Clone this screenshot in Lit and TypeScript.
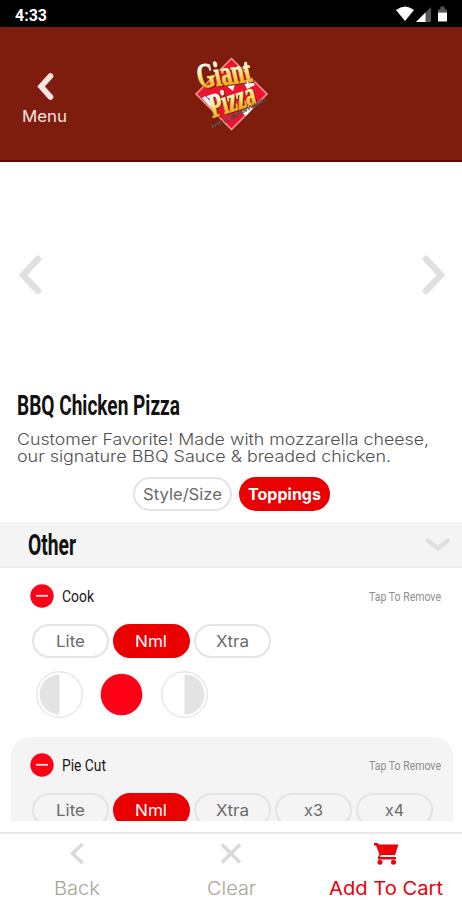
import { LitElement, html, svg, css } from "lit";
import { customElement, property } from "lit/decorators.js";

/** One line of text fitted to a given width; the box is as tall as the capitals. */
@customElement("fit-text")
class FitText extends LitElement {
  @property() text = "";
  @property({ type: Number }) w = 40;
  @property({ type: Number }) cap = 12;
  static styles = css`
    :host { display: block; flex: none; }
    svg { display: block; overflow: visible; }
    text { fill: currentColor; }
  `;
  render() {
    return html`<svg width=${this.w} height=${this.cap}>
      <text x="0" y=${this.cap} font-size=${this.cap / 0.72} textLength=${this.w}
        lengthAdjust="spacingAndGlyphs">${this.text}</text>
    </svg>`;
  }
}

const fit = (text: string, w: number, cap: number, cls = "") =>
  html`<fit-text class=${cls} .text=${text} .w=${w} .cap=${cap}></fit-text>`;

@customElement("pizza-logo")
class PizzaLogo extends LitElement {
  static styles = css`
    :host { display: block; }
    svg { display: block; overflow: visible; }
    .word { font-family: "Liberation Serif", serif; font-weight: 700; }
    .edge { fill: #5a2408; stroke: #5a2408; stroke-width: 1.6; }
    .gold { fill: url(#gold); stroke: url(#gold); stroke-width: 0.9; }
    .small { font: italic 700 5px "Liberation Sans", sans-serif; fill: #a3928c; stroke: #33211c; stroke-width: 0.3; }
  `;
  render() {
    return html`<svg width="76" height="76" viewBox="0 0 76 76">
      <defs>
        <linearGradient id="gold" x1="0" y1="0" x2="0" y2="1">
          <stop offset="0.3" stop-color="#fffdf0" /><stop offset="0.55" stop-color="#fae36e" />
          <stop offset="0.8" stop-color="#efb01a" />
        </linearGradient>
      </defs>
      <path d="M38.500 2.500 74 38 38.500 73.500 3 38Z" fill="#ec1530" stroke="#f79a9a" stroke-width="1.500" />
      <path d="M50 25 58 23 62 29 54 33ZM48 56 56 48 59 53 53 60ZM12 40 22 50 22 56 9 42ZM34 30 42 28 40 35Z" fill="#fff" />
      ${[
        ["Giant", "translate(6.500 32) rotate(-7) skewX(5)", 54, 35],
        ["Pizza", "translate(19.500 62) rotate(-18) skewX(-4)", 47, 34],
      ].map(([t, tr, len, size]) => svg`<g transform=${tr} class="word">
        <text class="edge" x="0.6" y="0.6" font-size=${size} textLength=${len} lengthAdjust="spacingAndGlyphs">${t}</text>
        <text class="gold" font-size=${size} textLength=${len} lengthAdjust="spacingAndGlyphs">${t}</text>
      </g>`)}
      <text class="small" transform="translate(19 73) rotate(-27)" textLength="61" lengthAdjust="spacingAndGlyphs">THE COMPANY WITH</text>
    </svg>`;
  }
}

@customElement("app-root")
class AppRoot extends LitElement {
  static styles = css`
    :host {
      display: flex; flex-direction: column; width: 462px; height: 900px; overflow: hidden;
      background: #fff; font-family: Inter, "Liberation Sans", sans-serif; color: #6a6a6a;
    }
    * { box-sizing: border-box; }
    svg { display: block; flex: none; }
    .status { height: 27px; background: #000; color: #fff; display: flex; justify-content: space-between; padding: 6px 14px 0 15px; }
    .clock { font-family: Roboto, sans-serif; font-weight: 700; padding-top: 3px; }
    .header { height: 135px; background: #7e1c0e; border-bottom: 2px solid #6b0200; display: grid; grid-template-columns: 1fr 76px 1fr; color: #f5e4e0; }
    .back { display: flex; flex-direction: column; width: 89px; align-items: center; padding-top: 45px; gap: 9px; }
    .logo { padding-top: 29px; }
    .carousel { height: 225px; display: flex; justify-content: space-between; align-items: center; padding: 0 15px 0 17px; }
    .info { height: 135px; padding: 7px 17px 0; }
    .din { font-family: Roboto, "Liberation Sans", sans-serif; color: #111; }
    .heavy { font-weight: 700; }
    .desc { color: #505050; font-weight: 300; height: 11px; }
    .lines { display: flex; flex-direction: column; gap: 6px; padding-top: 19px; }
    .tabs { display: flex; gap: 7px; padding: 15.5px 0 0 116px; }
    .pill { width: 77px; height: 34px; flex: none; border: 2px solid #e4e4e4; border-radius: 17px; display: flex; align-items: center; justify-content: center; }
    .pill.wide { width: 99px; }
    .pill.top { width: 91px; }
    .pill.on { background: #eb0000; border-color: #eb0000; color: #fff; }
    .section { height: 46px; background: #f4f4f4; border-bottom: 2px solid #ececec; display: flex; align-items: center; justify-content: space-between; padding: 0 11px 0 28px; }
    .list { height: 253px; overflow: hidden; padding: 0 9px 0 11px; flex: none; }
    .item { height: 169px; border-radius: 19px; padding: 16px 11px 0 19px; }
    .item.alt { background: #f4f4f4; }
    .title { display: flex; align-items: center; height: 24px; gap: 8px; }
    .name { flex: 1; color: #1d1518; }
    .tap { color: #8c8c8c; padding: 1px 1px 0 0; }
    .pills { display: flex; gap: 4px; padding: 16px 0 0 2px; }
    .item .pill { padding: 0 1px 0 0; }
    .halves { display: flex; gap: 15px; padding: 13px 0 0 5.5px; }
    .footer { margin-top: 11px; height: 68px; border-top: 2px solid #e8e8e8; display: grid; grid-template-columns: 154px 154px 155px; color: #a7a496; font-weight: 300; }
    .action { display: flex; flex-direction: column; align-items: center; padding-top: 9px; gap: 17px; }
    .action.cart { color: #e90008; font-weight: 400; }
  `;

  chevron(d: string, w: number, h: number, width: number, color: string) {
    return html`<svg width=${w} height=${h} fill="none" stroke=${color} stroke-width=${width} stroke-linecap="round" stroke-linejoin="miter"><path d=${d} /></svg>`;
  }

  pill(text: string, w: number, cls = "") {
    return html`<div class="pill ${cls}">${fit(text, w, 11.5)}</div>`;
  }

  half(kind: "left" | "full" | "right") {
    const body = {
      left: svg`<circle cx="23.500" cy="23.500" r="22.800" fill="none" stroke="#e7e7e7" stroke-width="1.400" /><path d="M23.500 3.500V43.500A20 20 0 0 1 23.500 3.500Z" fill="#e3e3e3" />`,
      full: svg`<circle cx="23.500" cy="23.500" r="20.800" fill="#ff0016" />`,
      right: svg`<circle cx="23.500" cy="23.500" r="22.800" fill="none" stroke="#e7e7e7" stroke-width="1.400" /><path d="M23.500 3.500V43.500A20 20 0 0 0 23.500 3.500Z" fill="#e3e3e3" />`,
    }[kind];
    return html`<svg width="47.500" height="47">${body}</svg>`;
  }

  itemTitle(name: string, w: number) {
    return html`<div class="title">
      <svg width="24" height="24"><circle cx="12" cy="12" r="11.700" fill="#ff0016" /><path d="M6 11.800H18" stroke="#ffdfe2" stroke-width="1.800" /></svg>
      <div class="name">${fit(name, w, 12, "din name")}</div>
      ${fit("Tap To Remove", 72, 9.3, "din tap")}
    </div>`;
  }

  render() {
    return html`
      <div class="status">
        <div class="clock">${fit("4:33", 32, 11.5)}</div>
        <svg width="52" height="17">
          <path d="M0 4Q9-3 18 4L9 15Z" fill="#fff" />
          <path d="M35 1V16H20Z" fill="#555" /><path d="M29.500 6.500V16H20Z" fill="#fff" />
          <path d="M42 6.500V4L44.500 2.500V.5H48.500V2.500L51 4V6.500Z" fill="#555" /><path d="M42 6.500H51V15.500H42Z" fill="#fff" />
        </svg>
      </div>
      <div class="header">
        <div class="back">
          ${this.chevron("M14.5 4 5 14.5 14.5 25", 18, 29, 5.6, "#f5e4e0")}
          ${fit("Menu", 45, 11.7)}
        </div>
        <pizza-logo class="logo"></pizza-logo>
      </div>
      <div class="carousel">
        ${this.chevron("M21 4 6 20 21 36", 26, 40, 6.4, "#e0e0df")}
        ${this.chevron("M6 4 21 20 6 36", 27, 40, 6.4, "#e0e0df")}
      </div>
      <div class="info">
        ${fit("BBQ Chicken Pizza", 163, 20.5, "din heavy")}
        <div class="lines">
          ${fit("Customer Favorite! Made with mozzarella cheese,", 412, 11.4, "desc")}
          ${fit("our signature BBQ Sauce & breaded chicken.", 374, 11.4, "desc")}
        </div>
        <div class="tabs">
          ${this.pill("Style/Size", 79, "wide")}${this.pill("Toppings", 73, "top on heavy")}
        </div>
      </div>
      <div class="section">
        ${fit("Other", 48, 21, "din heavy")}
        ${this.chevron("M3 4.5 13 12.5 23 4.5", 26, 16, 4.4, "#dfdfdf")}
      </div>
      <div class="list">
        <div class="item">
          ${this.itemTitle("Cook", 32)}
          <div class="pills">${this.pill("Lite", 29)}${this.pill("Nml", 32, "on")}${this.pill("Xtra", 33)}</div>
          <div class="halves">${this.half("left")}${this.half("full")}${this.half("right")}</div>
        </div>
        <div class="item alt">
          ${this.itemTitle("Pie Cut", 44)}
          <div class="pills">
            ${this.pill("Lite", 29)}${this.pill("Nml", 32, "on")}${this.pill("Xtra", 33)}${this.pill("x3", 19)}${this.pill("x4", 19)}
          </div>
        </div>
      </div>
      <div class="footer">
        <div class="action">
          <svg width="16" height="22" fill="none" stroke="#d9d9d9" stroke-width="3.600"><path d="M13.500 1 3.500 10.500 13.500 20" /></svg>
          ${fit("Back", 46, 13.3)}
        </div>
        <div class="action">
          <svg width="22" height="22" fill="none" stroke="#d9d9d9" stroke-width="3.600"><path d="M2 1.500 20 19.500M20 1.500 2 19.500" /></svg>
          ${fit("Clear", 49, 13.3)}
        </div>
        <div class="action cart">
          <svg width="26" height="22" fill="#f00008"><path d="M1 0H4.500L6 1.500H25.500L22 12H8L7 14H23V16.500H5V14L6.500 11.500 3 2.500H1Z" /><circle cx="7" cy="19.300" r="2.500" /><circle cx="20.500" cy="19.300" r="2.500" /></svg>
          ${fit("Add To Cart", 114, 13.3)}
        </div>
      </div>
    `;
  }
}
